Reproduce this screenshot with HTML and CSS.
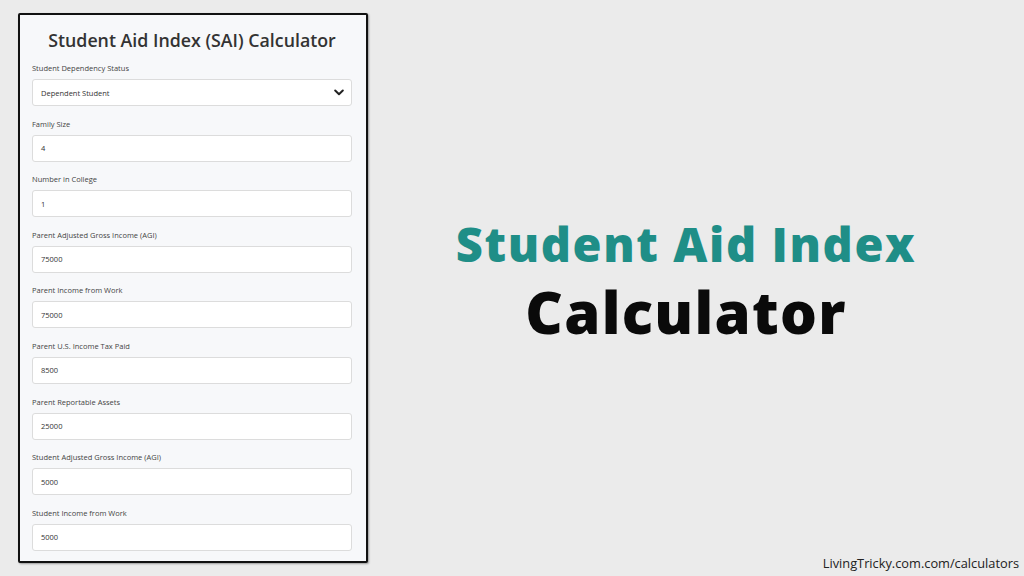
FILE: index.html
```html
<!DOCTYPE html>
<html lang="en">
<head>
<meta charset="utf-8">
<title>Student Aid Index Calculator</title>
<link rel="stylesheet" href="styles.css">
</head>
<body>
<div class="page">
  <div class="card">
    <h1 class="card-title">Student Aid Index (SAI) Calculator</h1>
    <div class="fields">
      <div class="field">
        <div class="label">Student Dependency Status</div>
        <div class="input select">
          <span>Dependent Student</span>
          <svg class="chev" width="10" height="7" viewBox="0 0 10 7"><path d="M1.2 1.5 L5 5.2 L8.8 1.5" fill="none" stroke="#222" stroke-width="2" stroke-linecap="round" stroke-linejoin="round"/></svg>
        </div>
      </div>
      <div class="field">
        <div class="label">Family Size</div>
        <div class="input">4</div>
      </div>
      <div class="field">
        <div class="label">Number in College</div>
        <div class="input">1</div>
      </div>
      <div class="field">
        <div class="label">Parent Adjusted Gross Income (AGI)</div>
        <div class="input">75000</div>
      </div>
      <div class="field">
        <div class="label">Parent Income from Work</div>
        <div class="input">75000</div>
      </div>
      <div class="field">
        <div class="label">Parent U.S. Income Tax Paid</div>
        <div class="input">8500</div>
      </div>
      <div class="field">
        <div class="label">Parent Reportable Assets</div>
        <div class="input">25000</div>
      </div>
      <div class="field">
        <div class="label">Student Adjusted Gross Income (AGI)</div>
        <div class="input">5000</div>
      </div>
      <div class="field">
        <div class="label">Student Income from Work</div>
        <div class="input">5000</div>
      </div>
    </div>
  </div>
  <div class="side">
    <div class="hero">
      <div class="hero-top">Student Aid Index</div>
      <div class="hero-bottom">Calculator</div>
    </div>
    <div class="footer">LivingTricky.com.com/calculators</div>
  </div>
</div>
</body>
</html>
```

FILE: styles.css
```css
* { box-sizing: border-box; }
html, body { margin: 0; padding: 0; }
body {
  background: #ebebeb;
  width: 1024px;
  height: 576px;
  overflow: hidden;
  font-family: "Open Sans", "Noto Sans", sans-serif;
}
.page {
  display: flex;
  height: 576px;
  padding: 13px 0 0 18px;
}
.card {
  width: 350px;
  height: 550px;
  background: #f7f8fa;
  border: 2px solid #111;
  border-radius: 2px;
  box-shadow: 1px 1px 2px rgba(0,0,0,0.35);
  padding: 12px 14px 0 12px;
}
.card-title {
  margin: 0 0 10px 0;
  font-size: 17.8px;
  line-height: 26px;
  font-weight: 600;
  color: #333;
  text-align: center;
}
.fields {
  display: flex;
  flex-direction: column;
  gap: 12.6px;
}
.label {
  font-size: 7.5px;
  line-height: 11px;
  color: #444;
  margin-bottom: 5px;
}
.input {
  height: 27px;
  background: #fff;
  border: 1px solid #dcdcdc;
  border-radius: 3px;
  font-size: 7.5px;
  color: #333;
  display: flex;
  align-items: center;
  padding: 0 8px;
}
.select { justify-content: space-between; }
.chev { margin-right: -1px; }
.side {
  flex: 1;
  display: flex;
  flex-direction: column;
}
.hero {
  flex: 1;
  display: flex;
  flex-direction: column;
  align-items: center;
  justify-content: center;
  padding-right: 20px;
  padding-bottom: 6px;
}
.hero-top {
  font-family: "Open Sans", sans-serif;
  font-weight: 800;
  font-size: 47px;
  line-height: 62px;
  letter-spacing: 1.6px;
  color: #1f8e87;
}
.hero-bottom {
  font-family: "Open Sans", sans-serif;
  font-weight: 800;
  font-size: 58px;
  line-height: 74px;
  letter-spacing: 1.3px;
  color: #0a0a0a;
}
.footer {
  align-self: flex-end;
  font-size: 12.8px;
  line-height: 16px;
  color: #222;
  padding: 0 5px 5px 0;
}
```
